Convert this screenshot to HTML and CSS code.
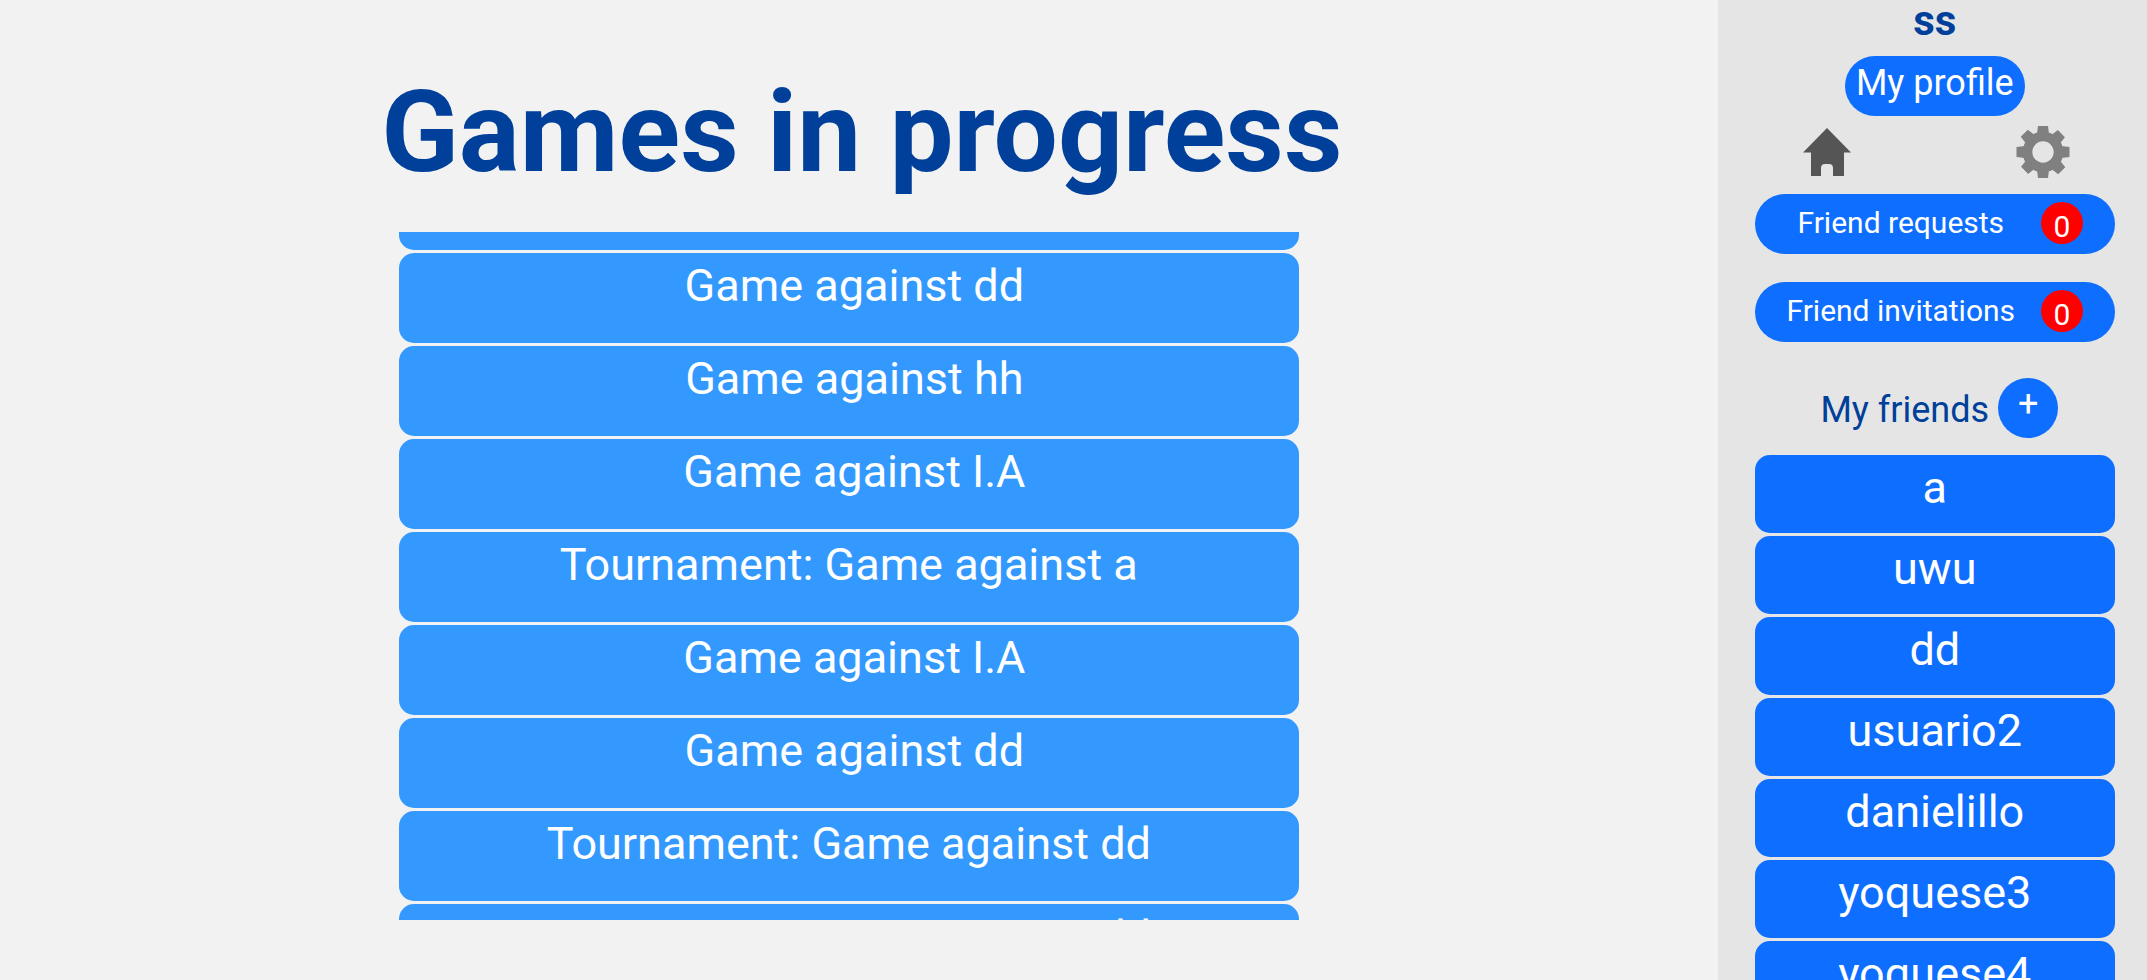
FILE: index.html
```html
<!DOCTYPE html>
<html lang="en">
<head>
<meta charset="utf-8">
<title>Games in progress</title>
<link rel="stylesheet" href="styles.css">
</head>
<body>
<div class="app">
  <main class="main">
    <h1 class="title">Games in progress</h1>
    <div class="games-scroll" id="games">
      <ul class="list">
        <li><button class="item game" type="button"> Game against hh</button></li>
        <li><button class="item game" type="button"> Game against dd</button></li>
        <li><button class="item game" type="button"> Game against hh</button></li>
        <li><button class="item game" type="button"> Game against I.A</button></li>
        <li><button class="item game" type="button">Tournament: Game against a</button></li>
        <li><button class="item game" type="button"> Game against I.A</button></li>
        <li><button class="item game" type="button"> Game against dd</button></li>
        <li><button class="item game" type="button">Tournament: Game against dd</button></li>
        <li><button class="item game" type="button">Tournament: Game against dd</button></li>
      </ul>
    </div>
  </main>
  <aside class="sidebar">
    <h2 class="user">ss</h2>
    <button class="profile" type="button">My profile</button>
    <nav class="icons">
      <a class="icon" href="#home" aria-label="Home">
        <svg width="48" height="48" viewBox="0 0 48 48"><path fill="#555" d="M24 0 48 24.500H41V48H30V40Q30 36 26 36H22Q18 36 18 40V48H8V24.500H0Z"/></svg>
      </a>
      <a class="icon" href="#settings" aria-label="Settings">
        <svg width="54" height="54" viewBox="-27 -27 54 54">
          <defs><g id="teeth"><path d="M-5-26H5L6-18H-6ZM-5 26H5L6 18H-6Z"/><path d="M-26.500-5V5L-18 6V-6ZM26.500-5V5L18 6V-6Z"/></g></defs>
          <g fill="#808080"><use href="#teeth"/><use href="#teeth" transform="rotate(45)"/></g>
          <circle r="15.500" fill="none" stroke="#808080" stroke-width="9.600"/>
        </svg>
      </a>
    </nav>
    <div class="notices">
      <button class="notice" type="button"><span class="notice-label">Friend requests</span><span class="badge">0</span></button>
      <button class="notice" type="button"><span class="notice-label">Friend invitations</span><span class="badge">0</span></button>
    </div>
    <div class="friends-head">
      <h3 class="friends-title">My friends</h3>
      <button class="add" type="button" aria-label="Add friend">+</button>
    </div>
    <ul class="list">
      <li><button class="item friend" type="button">a</button></li>
      <li><button class="item friend" type="button">uwu</button></li>
      <li><button class="item friend" type="button">dd</button></li>
      <li><button class="item friend" type="button">usuario2</button></li>
      <li><button class="item friend" type="button">danielillo</button></li>
      <li><button class="item friend" type="button">yoquese3</button></li>
      <li><button class="item friend" type="button">yoquese4</button></li>
    </ul>
  </aside>
</div>
<script src="script.js"></script>
</body>
</html>
```
FILE: styles.css
```css
* {
  box-sizing: border-box;
}

body {
  margin: 0;
  font-family: Roboto, "Liberation Sans", sans-serif;
  background: #f2f2f2;
}

button {
  border: 0;
  padding: 0;
  font: inherit;
  color: #fff;
  cursor: pointer;
}

h1, h2, h3 {
  margin: 0;
  color: #00409a;
}

.app {
  display: grid;
  grid-template-columns: 4fr 1fr;
  height: 100vh;
  overflow: hidden;
}

.main {
  display: flex;
  flex-direction: column;
  align-items: center;
  gap: 33px;
  min-height: 0;
  padding: 65px 0 60px 6px;
}

.title {
  font-size: 114px;
  line-height: 134px;
  font-weight: 700;
}

.games-scroll {
  flex: 1;
  min-height: 0;
  width: 900px;
  max-width: 100%;
  margin-right: 26px;
  overflow-y: auto;
  scrollbar-width: none;
}

.list {
  display: flex;
  flex-direction: column;
  gap: 3px;
  margin: 0;
  padding: 0;
  list-style: none;
}

.item {
  display: flex;
  justify-content: center;
  align-items: flex-start;
  width: 100%;
  padding-top: 6px;
  border-radius: 15px;
  font-size: 45px;
  line-height: 53px;
  white-space: pre;
}

.game {
  height: 90px;
  background: #3399ff;
}

.friend {
  height: 78px;
  background: #0d6eff;
}

.sidebar {
  display: flex;
  flex-direction: column;
  min-height: 0;
  overflow: hidden;
  padding: 0 32px 0 37px;
  background: #e5e5e5;
}

.sidebar > * {
  flex-shrink: 0;
}

.user {
  padding-bottom: 14px;
  font-size: 42px;
  line-height: 42px;
  text-align: center;
}

.profile {
  align-self: center;
  width: 180px;
  height: 60px;
  padding-bottom: 6px;
  border-radius: 30px;
  background: #0d6eff;
  font-size: 36px;
  line-height: 42px;
}

.icons {
  display: flex;
  justify-content: space-between;
  align-items: center;
  height: 78px;
  padding: 0 45px 6px 48px;
}

.icon {
  display: flex;
}

.notices {
  display: flex;
  flex-direction: column;
  gap: 28px;
}

.notice {
  display: flex;
  align-items: center;
  height: 60px;
  padding: 0 32px 2px 6px;
  border-radius: 30px;
  background: #0d6eff;
  font-size: 30px;
  line-height: 36px;
}

.notice-label {
  flex: 1;
}

.badge {
  width: 42px;
  height: 42px;
  padding-top: 4px;
  border-radius: 50%;
  background: #f00;
  line-height: 42px;
}

.friends-head {
  display: flex;
  justify-content: center;
  gap: 9px;
  padding: 36px 0 17px 9px;
}

.friends-title {
  padding-top: 10px;
  font-size: 36px;
  line-height: 45px;
  font-weight: 400;
}

.add {
  width: 60px;
  height: 60px;
  padding-bottom: 8px;
  border-radius: 50%;
  background: #0d6eff;
  font-size: 36px;
  line-height: 42px;
}
```
FILE: script.js
```js
document.getElementById("games").scrollTop = 72;
```
